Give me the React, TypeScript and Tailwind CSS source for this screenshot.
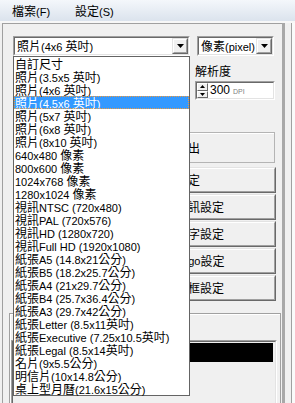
import React from 'react';

const CJK = /([\u2e80-\u9fff\uf900-\ufaff\uff00-\uffef]+)/;

function T({ s }: { s: string }) {
  return (
    <>
      {s
        .split(CJK)
        .filter(Boolean)
        .map((p, i) =>
          CJK.test(p) ? (
            <span key={i} className="inline-block font-['Noto_Sans_CJK_TC'] text-[12px]">
              {p}
            </span>
          ) : (
            <span key={i} className="inline-block font-['Liberation_Sans'] text-[11px]">
              {p}
            </span>
          )
        )}
    </>
  );
}

const sizes = [
  '自訂尺寸',
  '照片(3.5x5 英吋)',
  '照片(4x6 英吋)',
  '照片(4.5x6 英吋)',
  '照片(5x7 英吋)',
  '照片(6x8 英吋)',
  '照片(8x10 英吋)',
  '640x480 像素',
  '800x600 像素',
  '1024x768 像素',
  '1280x1024 像素',
  '視訊NTSC (720x480)',
  '視訊PAL (720x576)',
  '視訊HD (1280x720)',
  '視訊Full HD (1920x1080)',
  '紙張A5 (14.8x21公分)',
  '紙張B5 (18.2x25.7公分)',
  '紙張A4 (21x29.7公分)',
  '紙張B4 (25.7x36.4公分)',
  '紙張A3 (29.7x42公分)',
  '紙張Letter (8.5x11英吋)',
  '紙張Executive (7.25x10.5英吋)',
  '紙張Legal (8.5x14英吋)',
  '名片(9x5.5公分)',
  '明信片(10x14.8公分)',
  '桌上型月曆(21.6x15公分)',
];

const buttons = ['設定', '資訊設定', '文字設定', 'Logo設定', '外框設定'];

function DownArrow() {
  return (
    <svg width="7" height="4" viewBox="0 0 7 4">
      <path d="M0 0h7L3.5 4z" fill="#000" />
    </svg>
  );
}

function Combo({ width, text }: { width: string; text: string }) {
  return (
    <div
      className={`${width} h-[20px] border border-t-[#a0a0a0] border-l-[#a0a0a0] border-r-white border-b-white`}
    >
      <div className="flex h-full border border-t-[#696969] border-l-[#696969] border-r-[#e3e3e3] border-b-[#e3e3e3] bg-white">
        <div className="flex-1 whitespace-pre pl-[2px] leading-[16px]">
          <T s={text} />
        </div>
        <div className="w-[16px] border border-t-[#e3e3e3] border-l-[#e3e3e3] border-r-[#696969] border-b-[#696969]">
          <div className="flex h-full items-center justify-center border border-t-white border-l-white border-r-[#a0a0a0] border-b-[#a0a0a0] bg-[#f0f0f0]">
            <DownArrow />
          </div>
        </div>
      </div>
    </div>
  );
}

function SpinHalf({ up }: { up?: boolean }) {
  return (
    <div className="flex flex-1 items-center justify-center border border-t-white border-l-white border-r-[#696969] border-b-[#696969] bg-[#f0f0f0]">
      <svg width="5" height="3" viewBox="0 0 5 3">
        <path d={up ? 'M2.5 0L5 3H0z' : 'M0 0h5L2.5 3z'} fill="#000" />
      </svg>
    </div>
  );
}

export default function App() {
  return (
    <div className="relative h-[403px] w-[295px] overflow-hidden bg-[#f0f0f0] font-['Liberation_Sans','Noto_Sans_CJK_TC',sans-serif] text-black">
      {/* menu bar */}
      <div className="flex h-[21px] items-center gap-[25px] bg-linear-to-b from-[#f4f7fb] to-[#dbe3ed] pl-[12px] pt-[2px] leading-[14px]">
        <div className="whitespace-pre">
          <T s="檔案(F)" />
        </div>
        <div className="whitespace-pre">
          <T s="設定(S)" />
        </div>
      </div>
      <div className="h-[2px] bg-[#f7f7f7]" />

      <div className="flex h-[380px]">
        <div className="w-[2px]" />
        {/* main panel */}
        <div className="flex w-[280px] flex-col border-t border-l border-[#a0a0a0]">
          <div className="flex pt-[12px] pl-[10px]">
            <Combo width="w-[177px]" text="照片(4x6 英吋)" />
            <div className="ml-[7px]">
              <Combo width="w-[77px]" text="像素(pixel)" />
            </div>
          </div>

          <div className="mt-[8px] pl-[192px] leading-[14px]">
            <T s="解析度" />
          </div>
          <div className="mt-[3px] ml-[192px] h-[19px] w-[80px] border border-t-[#a0a0a0] border-l-[#a0a0a0] border-r-white border-b-white">
            <div className="flex h-full border border-t-[#696969] border-l-[#696969] border-r-[#e3e3e3] border-b-[#e3e3e3] bg-white">
              <div className="flex w-[11px] flex-col">
                <SpinHalf up />
                <SpinHalf />
              </div>
              <div className="flex items-baseline pl-[2px] leading-[15px]">
                <span className="text-[12px]">300</span>
                <span className="ml-[3px] text-[7px] text-[#808080]">DPI</span>
              </div>
            </div>
          </div>

          {/* button stack */}
          <div className="mt-[32px] mr-[6px] flex flex-col gap-[1px] self-end">
            <div className="mb-[3px] mr-[1px] flex h-[31px] w-[147px] items-center border border-[#b4b4b4] pl-[47px] leading-[14px] shadow-[inset_1px_1px_0_#fff]">
              <T s="匯出" />
            </div>
            {buttons.map((b) => (
              <div
                key={b}
                className="h-[26px] w-[148px] border border-t-[#e3e3e3] border-l-[#e3e3e3] border-r-[#696969] border-b-[#696969]"
              >
                <div className="flex h-full items-center whitespace-pre border border-t-white border-l-white border-r-[#a0a0a0] border-b-[#a0a0a0] pl-[46px] leading-[14px]">
                  <T s={b} />
                </div>
              </div>
            ))}
          </div>

          {/* bottom group */}
          <div className="mt-[12px] ml-[6px] mr-[1px] flex-1 border border-[#a0a0a0] shadow-[inset_1px_1px_0_#fff]">
            <div className="mt-[26px] ml-[1px] mr-[3px] h-[90px] border border-t-[#a0a0a0] border-l-[#a0a0a0] border-r-white border-b-white">
              <div className="h-full border border-t-[#696969] border-l-[#696969] border-r-[#e3e3e3] border-b-[#e3e3e3] p-[1px]">
                <div className="mr-[1px] h-[19px] bg-black" />
              </div>
            </div>
          </div>
        </div>

        {/* splitter */}
        <div className="w-[3px] bg-[#a8a8a8]" />
        <div className="w-[6px]" />
        <div className="w-[1px] bg-[#a0a0a0]" />
        <div className="w-[3px] bg-[#fafafa]" />
      </div>

      {/* open dropdown list */}
      <div className="absolute top-[56px] left-[13px] z-10 h-[340px] w-[177px] border border-[#646464] bg-white">
        {sizes.map((s, i) => (
          <div
            key={s}
            className={`h-[13px] whitespace-pre pl-[1px] leading-[13px] ${
              i === 3
                ? 'bg-[#3399ff] text-white outline-1 -outline-offset-1 outline-dotted outline-[#f09a3c]'
                : ''
            }`}
          >
            <T s={s} />
          </div>
        ))}
      </div>
    </div>
  );
}
